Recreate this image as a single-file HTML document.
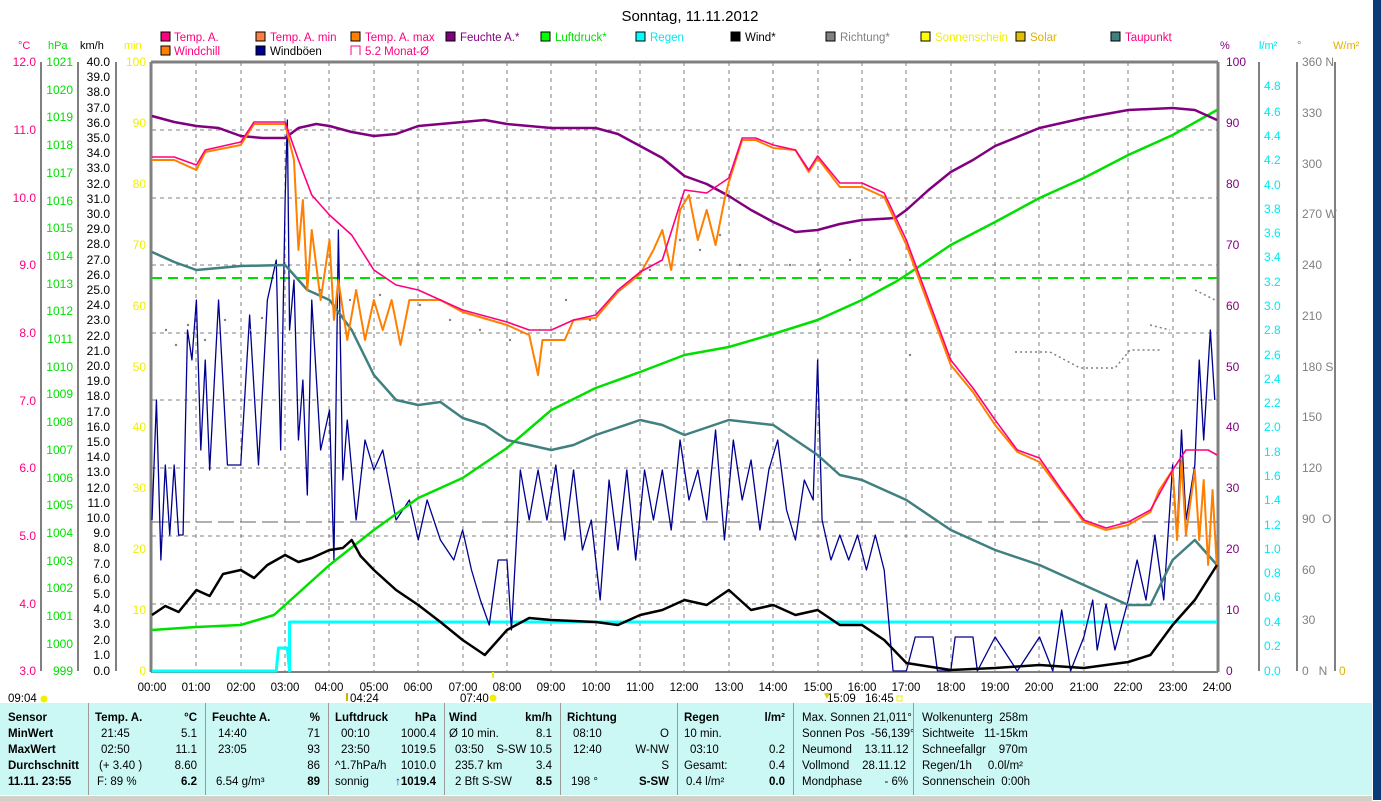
<!DOCTYPE html>
<html><head><meta charset="utf-8"><style>
html,body{margin:0;padding:0;background:#fff;width:1381px;height:800px;overflow:hidden;font-family:"Liberation Sans",sans-serif}
svg text{font-family:"Liberation Sans",sans-serif}
.panel{position:absolute;left:0;top:703px;width:1372px;height:92px;background:#cbf7f5;font-size:11.5px;color:#000}
.col{position:absolute;top:0;height:92px;border-left:1px solid #9a9a9a}
.r{position:absolute;white-space:nowrap}
.b{font-weight:bold}
</style></head><body>
<svg width="1381" height="800" style="position:absolute;left:0;top:0" xmlns="http://www.w3.org/2000/svg">
<rect x="1373" y="0" width="8" height="800" fill="#0b3a78"/>
<text x="690" y="21" font-size="15" text-anchor="middle">Sonntag, 11.11.2012</text>
<g font-size="11.5">
<rect x="161" y="32" width="9" height="9" fill="#ff0080" stroke="#000"/><text x="174" y="41" fill="#ff0080">Temp. A.</text>
<rect x="161" y="46" width="9" height="9" fill="#ff8000" stroke="#000"/><text x="174" y="55" fill="#ff0080">Windchill</text>
<rect x="256" y="32" width="9" height="9" fill="#ff8040" stroke="#000"/><text x="270" y="41" fill="#ff0080">Temp. A. min</text>
<rect x="256" y="46" width="9" height="9" fill="#000090" stroke="#000"/><text x="270" y="55">Windböen</text>
<rect x="351" y="32" width="9" height="9" fill="#ff8000" stroke="#000"/><text x="365" y="41" fill="#ff0080">Temp. A. max</text>
<path d="M351 55V46h9v9" fill="none" stroke="#ff0080"/><text x="365" y="55" fill="#ff0080">5.2 Monat-Ø</text>
<rect x="446" y="32" width="9" height="9" fill="#800080" stroke="#000"/><text x="460" y="41" fill="#800080">Feuchte A.*</text>
<rect x="541" y="32" width="9" height="9" fill="#00ff00" stroke="#000"/><text x="555" y="41" fill="#00e000">Luftdruck*</text>
<rect x="636" y="32" width="9" height="9" fill="#00ffff" stroke="#000"/><text x="650" y="41" fill="#00e8f0">Regen</text>
<rect x="731" y="32" width="9" height="9" fill="#000" stroke="#000"/><text x="745" y="41">Wind*</text>
<rect x="826" y="32" width="9" height="9" fill="#808080" stroke="#000"/><text x="840" y="41" fill="#808080">Richtung*</text>
<rect x="921" y="32" width="9" height="9" fill="#ffff00" stroke="#000"/><text x="935" y="41" fill="#f0f000">Sonnenschein</text>
<rect x="1016" y="32" width="9" height="9" fill="#e0c000" stroke="#000"/><text x="1030" y="41" fill="#e0b000">Solar</text>
<rect x="1111" y="32" width="9" height="9" fill="#408080" stroke="#000"/><text x="1125" y="41" fill="#ff0080">Taupunkt</text>
</g>
<g font-size="11">
<text x="18" y="49" fill="#ff0080">°C</text><text x="48" y="49" fill="#00e000">hPa</text><text x="80" y="49">km/h</text><text x="124" y="49" fill="#f0f000">min</text>
<text x="1220" y="49" fill="#800080">%</text><text x="1259" y="49" fill="#00e8f0">l/m²</text><text x="1297" y="49" fill="#808080">°</text><text x="1333" y="49" fill="#e0b000">W/m²</text>
</g>
<!-- axis lines -->
<g stroke="#808080" stroke-width="2" fill="none">
<path d="M41 62V671M78 62V671M116 62V671M1259 62V671M1297 62V671M1335 62V671"/>
</g>
<path d="M151 62V672M1218 62V672" stroke="#808080" stroke-width="3"/>
<path d="M151 62H1218" stroke="#808080" stroke-width="3"/>
<path d="M151 672H1218" stroke="#808080" stroke-width="2"/>
<!-- grid -->
<g stroke="#808080" stroke-dasharray="4,4" stroke-width="1">
<path d="M196 62V671M241 62V671M285 62V671M329 62V671M374 62V671M418 62V671M463 62V671M507 62V671M551 62V671M596 62V671M640 62V671M684 62V671M729 62V671M773 62V671M818 62V671M862 62V671M906 62V671M951 62V671M995 62V671M1039 62V671M1084 62V671M1128 62V671M1173 62V671"/>
<path d="M152 130H1217M152 198H1217M152 265H1217M152 333H1217M152 400H1217M152 468H1217M152 536H1217M152 604H1217"/>
</g>
<path d="M152 278H1217" stroke="#00e000" stroke-dasharray="10,6" stroke-width="2"/>
<path d="M152 522H1217" stroke="#606060" stroke-dasharray="16,6" stroke-width="1"/>
<!-- left ticks and labels -->
<g font-size="12" text-anchor="end" fill="#ff0080">
<text x="36" y="66">12.0</text><text x="36" y="134">11.0</text><text x="36" y="202">10.0</text><text x="36" y="269">9.0</text><text x="36" y="337">8.0</text><text x="36" y="405">7.0</text><text x="36" y="472">6.0</text><text x="36" y="540">5.0</text><text x="36" y="608">4.0</text><text x="36" y="675">3.0</text>
</g>
<g font-size="12" text-anchor="end" fill="#00e000">
<text x="73" y="66">1021</text><text x="73" y="94">1020</text><text x="73" y="121">1019</text><text x="73" y="149">1018</text><text x="73" y="177">1017</text><text x="73" y="205">1016</text><text x="73" y="232">1015</text><text x="73" y="260">1014</text><text x="73" y="288">1013</text><text x="73" y="315">1012</text><text x="73" y="343">1011</text><text x="73" y="371">1010</text><text x="73" y="398">1009</text><text x="73" y="426">1008</text><text x="73" y="454">1007</text><text x="73" y="482">1006</text><text x="73" y="509">1005</text><text x="73" y="537">1004</text><text x="73" y="565">1003</text><text x="73" y="592">1002</text><text x="73" y="620">1001</text><text x="73" y="648">1000</text><text x="73" y="675">999</text>
</g>
<g font-size="12" text-anchor="end" fill="#000" id="kmh">
<text x="110" y="66">40.0</text><text x="110" y="81">39.0</text><text x="110" y="96">38.0</text><text x="110" y="112">37.0</text><text x="110" y="127">36.0</text><text x="110" y="142">35.0</text><text x="110" y="157">34.0</text><text x="110" y="172">33.0</text><text x="110" y="188">32.0</text><text x="110" y="203">31.0</text><text x="110" y="218">30.0</text><text x="110" y="233">29.0</text><text x="110" y="248">28.0</text><text x="110" y="264">27.0</text><text x="110" y="279">26.0</text><text x="110" y="294">25.0</text><text x="110" y="309">24.0</text><text x="110" y="324">23.0</text><text x="110" y="340">22.0</text><text x="110" y="355">21.0</text><text x="110" y="370">20.0</text><text x="110" y="385">19.0</text><text x="110" y="400">18.0</text><text x="110" y="416">17.0</text><text x="110" y="431">16.0</text><text x="110" y="446">15.0</text><text x="110" y="461">14.0</text><text x="110" y="476">13.0</text><text x="110" y="492">12.0</text><text x="110" y="507">11.0</text><text x="110" y="522">10.0</text><text x="110" y="537">9.0</text><text x="110" y="552">8.0</text><text x="110" y="568">7.0</text><text x="110" y="583">6.0</text><text x="110" y="598">5.0</text><text x="110" y="613">4.0</text><text x="110" y="628">3.0</text><text x="110" y="644">2.0</text><text x="110" y="659">1.0</text><text x="110" y="675">0.0</text>
</g>
<g font-size="12" text-anchor="end" fill="#f0f000">
<text x="146" y="66">100</text><text x="146" y="127">90</text><text x="146" y="188">80</text><text x="146" y="249">70</text><text x="146" y="310">60</text><text x="146" y="371">50</text><text x="146" y="431">40</text><text x="146" y="492">30</text><text x="146" y="553">20</text><text x="146" y="614">10</text><text x="146" y="675">0</text>
</g>
<g font-size="12" fill="#800080">
<text x="1226" y="66">100</text><text x="1226" y="127">90</text><text x="1226" y="188">80</text><text x="1226" y="249">70</text><text x="1226" y="310">60</text><text x="1226" y="371">50</text><text x="1226" y="431">40</text><text x="1226" y="492">30</text><text x="1226" y="553">20</text><text x="1226" y="614">10</text><text x="1226" y="675">0</text>
</g>
<g font-size="12" fill="#00e8f0">
<text x="1264" y="90">4.8</text><text x="1264" y="116">4.6</text><text x="1264" y="140">4.4</text><text x="1264" y="164">4.2</text><text x="1264" y="189">4.0</text><text x="1264" y="213">3.8</text><text x="1264" y="237">3.6</text><text x="1264" y="261">3.4</text><text x="1264" y="286">3.2</text><text x="1264" y="310">3.0</text><text x="1264" y="334">2.8</text><text x="1264" y="359">2.6</text><text x="1264" y="383">2.4</text><text x="1264" y="407">2.2</text><text x="1264" y="431">2.0</text><text x="1264" y="456">1.8</text><text x="1264" y="480">1.6</text><text x="1264" y="504">1.4</text><text x="1264" y="529">1.2</text><text x="1264" y="553">1.0</text><text x="1264" y="577">0.8</text><text x="1264" y="601">0.6</text><text x="1264" y="626">0.4</text><text x="1264" y="650">0.2</text><text x="1264" y="675">0.0</text>
</g>
<g font-size="12" fill="#808080">
<text x="1302" y="66">360 N</text><text x="1302" y="117">330</text><text x="1302" y="168">300</text><text x="1302" y="218">270 W</text><text x="1302" y="269">240</text><text x="1302" y="320">210</text><text x="1302" y="371">180 S</text><text x="1302" y="421">150</text><text x="1302" y="472">120</text><text x="1302" y="523">90 &#160;O</text><text x="1302" y="574">60</text><text x="1302" y="624">30</text><text x="1302" y="675">0 &#160;&#160;N</text>
</g>
<text x="1339" y="675" font-size="12" fill="#e0b000">0</text>
<!-- data -->
<g transform="translate(152,0) scale(44.375,1)" fill="none" stroke-linejoin="round">
<polyline vector-effect="non-scaling-stroke" stroke="#00ffff" stroke-width="3" points="0,671 2.8,671 2.85,648 3.05,648 3.1,671 3.1,622 24,622"/>
<polyline vector-effect="non-scaling-stroke" stroke="#000090" stroke-width="1.3" points="0,520 0.1,400 0.2,560 0.3,465 0.4,535 0.5,465 0.6,535 0.7,535 0.8,330 0.9,360 1.0,300 1.1,450 1.2,360 1.3,470 1.5,300 1.7,465 2.0,465 2.2,315 2.4,465 2.6,300 2.8,260 2.9,450 3.0,200 3.05,120 3.1,330 3.2,280 3.3,440 3.4,380 3.5,495 3.6,300 3.8,450 4.0,410 4.1,560 4.2,230 4.3,480 4.4,420 4.6,520 4.8,440 5.0,470 5.2,450 5.5,520 5.8,500 6.0,540 6.2,500 6.5,540 6.8,560 7.0,530 7.2,570 7.4,600 7.6,625 7.8,560 8.0,560 8.1,630 8.3,470 8.5,520 8.7,470 8.9,520 9.1,465 9.3,540 9.5,470 9.7,550 9.9,520 10.1,600 10.3,480 10.5,550 10.7,470 10.9,560 11.1,470 11.3,520 11.5,470 11.7,530 11.9,440 12.1,500 12.3,470 12.5,520 12.7,430 12.9,540 13.1,440 13.3,500 13.5,460 13.7,530 13.9,470 14.1,440 14.3,510 14.5,540 14.7,480 14.9,500 15.0,360 15.1,520 15.3,560 15.5,535 15.7,560 15.9,535 16.1,570 16.3,535 16.5,570 16.6,620 16.7,671 17.0,671 17.2,637 17.6,637 17.7,671 18.0,671 18.1,637 18.5,637 18.6,671 19.0,637 19.5,671 20.0,637 20.3,671 20.5,610 20.7,671 21.0,637 21.2,600 21.3,650 21.5,604 21.7,650 22.0,600 22.2,560 22.4,600 22.6,535 22.8,600 23.0,465 23.1,535 23.2,430 23.3,520 23.5,465 23.6,360 23.7,440 23.85,330 23.95,400"/>
<polyline vector-effect="non-scaling-stroke" stroke="#00e000" stroke-width="2.5" points="0,630 1,627 2,625 2.75,615 3.5,585 4,565 5,530 6,498 7,478 8,448 9,410 10,388 11,372 12,355 13,347 14,334 15,320 16,300 16.75,282 17,275 18,245 19,222 20,198 21,178 22,155 23,135 24,110"/>
<polyline vector-effect="non-scaling-stroke" stroke="#800080" stroke-width="2.5" points="0,116 0.5,122 1,126 1.5,128 2,136 2.5,138 3,138 3.3,128 3.7,124 4,126 4.5,132 5,136 5.5,134 6,126 7,122 7.5,120 8,124 9,128 10,128 10.5,134 11,146 11.5,158 12,176 12.5,184 13,196 13.5,210 14,222 14.5,232 15,230 15.5,224 16,220 16.75,218 17,210 17.5,190 18,172 18.5,160 19,146 20,128 21,118 22,110 23,108 23.5,110 24,120"/>
<polyline vector-effect="non-scaling-stroke" stroke="#408080" stroke-width="2.5" points="0,252 0.5,262 1,270 2,266 3,265 3.5,290 4,300 4.5,330 5,375 5.5,400 6,405 6.5,402 7,418 7.5,425 8,440 8.5,445 9,450 9.5,445 10,435 11,420 11.5,425 12,435 13,420 14,425 15,455 15.5,475 16,480 16.5,490 17,500 18,530 19,550 20,565 21,585 22,605 22.5,605 23,560 23.5,540 24,565"/>
<polyline vector-effect="non-scaling-stroke" stroke="#ff8000" stroke-width="2" points="0,160 0.5,160 1,170 1.2,152 2,145 2.3,124 3,124 3.2,160 3.3,250 3.4,200 3.5,290 3.6,230 3.8,300 4,240 4.1,320 4.2,280 4.4,340 4.6,290 4.8,340 5,300 5.2,330 5.4,300 5.6,345 5.8,300 6,300 6.5,300 7,312 8,325 8.5,335 8.7,375 8.8,340 9.3,340 9.5,320 10,318 10.5,292 11,274 11.3,250 11.5,230 11.7,270 11.9,210 12.1,195 12.3,240 12.5,210 12.7,245 12.9,200 13,182 13.3,140 13.6,140 14,148 14.5,150 14.8,172 15,158 15.5,187 16,187 16.5,197 17,245 17.5,305 18,365 18.5,392 19,425 19.5,452 20,462 20.5,492 21,522 21.5,530 22,525 22.5,512 22.7,490 23,470 23.1,540 23.2,460 23.3,535 23.5,470 23.6,540 23.7,480 23.8,565 23.9,490 24,570"/>
<polyline vector-effect="non-scaling-stroke" stroke="#ff0080" stroke-width="1.6" points="0,157 0.5,157 1,165 1.2,150 2,142 2.3,122 3,122 3.3,160 3.6,195 4,215 4.5,235 5,270 5.5,285 6,290 6.5,300 7,310 8,322 8.5,330 9,330 9.5,320 10,315 10.5,290 11,272 11.5,260 12,190 12.5,193 13,178 13.3,138 13.6,138 14,145 14.5,150 14.8,170 15,156 15.5,183 16,183 16.5,193 17,240 17.5,300 18,360 18.5,388 19,420 19.5,450 20,458 20.5,490 21,520 21.5,528 22,522 22.5,510 23,470 23.3,450 23.8,450 24,455"/>
<polyline vector-effect="non-scaling-stroke" stroke="#000" stroke-width="2.5" points="0,615 0.3,606 0.6,612 1,590 1.3,596 1.6,574 2,570 2.3,578 2.6,565 3,555 3.3,562 3.6,558 4,550 4.3,548 4.5,540 4.7,556 5,570 5.5,590 6,605 6.5,622 7,640 7.5,655 8,630 8.5,618 9,620 10,622 10.5,625 11,615 11.5,610 12,600 12.5,605 13,590 13.5,610 14,605 14.5,615 15,610 15.5,625 16,625 16.5,640 17,663 18,670 19,668 20,665 21,668 22,662 22.5,655 23,625 23.5,600 24,565"/>
</g>
<g fill="#808080">
<circle cx="166" cy="330" r="1.2"/><circle cx="176" cy="345" r="1.2"/><circle cx="188" cy="325" r="1.2"/><circle cx="205" cy="340" r="1.2"/><circle cx="225" cy="320" r="1.2"/><circle cx="250" cy="330" r="1.2"/><circle cx="262" cy="318" r="1.2"/><circle cx="320" cy="290" r="1.2"/><circle cx="350" cy="300" r="1.2"/><circle cx="380" cy="295" r="1.2"/><circle cx="420" cy="305" r="1.2"/><circle cx="450" cy="320" r="1.2"/><circle cx="480" cy="330" r="1.2"/><circle cx="510" cy="340" r="1.2"/><circle cx="540" cy="330" r="1.2"/><circle cx="566" cy="300" r="1.2"/><circle cx="590" cy="320" r="1.2"/><circle cx="620" cy="290" r="1.2"/><circle cx="650" cy="270" r="1.2"/><circle cx="680" cy="240" r="1.2"/><circle cx="700" cy="250" r="1.2"/><circle cx="720" cy="235" r="1.2"/><circle cx="740" cy="265" r="1.2"/><circle cx="760" cy="270" r="1.2"/><circle cx="790" cy="265" r="1.2"/><circle cx="820" cy="270" r="1.2"/><circle cx="850" cy="260" r="1.2"/><circle cx="880" cy="280" r="1.2"/><circle cx="910" cy="355" r="1.2"/><circle cx="950" cy="355" r="1.2"/>
</g>
<path d="M1015 352H1050L1080 368H1115L1130 350H1160M1150 325L1170 330M1195 290L1215 300" stroke="#808080" stroke-width="1.5" stroke-dasharray="2,3" fill="none"/>
<!-- time labels -->
<g font-size="11.5" text-anchor="middle">
<text x="152" y="691">00:00</text><text x="196" y="691">01:00</text><text x="241" y="691">02:00</text><text x="285" y="691">03:00</text><text x="329" y="691">04:00</text><text x="374" y="691">05:00</text><text x="418" y="691">06:00</text><text x="463" y="691">07:00</text><text x="507" y="691">08:00</text><text x="551" y="691">09:00</text><text x="596" y="691">10:00</text><text x="640" y="691">11:00</text><text x="684" y="691">12:00</text><text x="729" y="691">13:00</text><text x="773" y="691">14:00</text><text x="818" y="691">15:00</text><text x="862" y="691">16:00</text><text x="906" y="691">17:00</text><text x="951" y="691">18:00</text><text x="995" y="691">19:00</text><text x="1039" y="691">20:00</text><text x="1084" y="691">21:00</text><text x="1128" y="691">22:00</text><text x="1173" y="691">23:00</text><text x="1217" y="691">24:00</text>
</g>
<g font-size="11.5">
<text x="8" y="702">09:04</text><circle cx="44" cy="699" r="3.5" fill="#f0f000"/>
<text x="350" y="702">04:24</text><path d="M347 693v8" stroke="#d0b000" stroke-width="2"/>
<text x="460" y="702">07:40</text><circle cx="493" cy="698" r="3.5" fill="#f0f000"/><path d="M493 672v6" stroke="#f0f000" stroke-width="2"/>
<text x="827" y="702">15:09</text><path d="M824 693l3 6 3-6z" fill="#e0d000"/>
<text x="865" y="702">16:45</text><rect x="897" y="696" width="5" height="5" fill="none" stroke="#f0f000"/>
</g>
</svg>
<div class="panel">
<div class="r b" style="left:8px;top:9px">Sensor</div>
<div class="r b" style="left:8px;top:25px">MinWert</div>
<div class="r b" style="left:8px;top:41px">MaxWert</div>
<div class="r b" style="left:8px;top:57px">Durchschnitt</div>
<div class="r b" style="left:8px;top:73px">11.11. 23:55</div>
<div class="col" style="left:88px;width:116px">
<div class="r b" style="left:6px;top:9px">Temp. A.</div><div class="r b" style="right:8px;top:9px">°C</div>
<div class="r" style="left:12px;top:25px">21:45</div><div class="r" style="right:8px;top:25px">5.1</div>
<div class="r" style="left:12px;top:41px">02:50</div><div class="r" style="right:8px;top:41px">11.1</div>
<div class="r" style="left:10px;top:57px">(+ 3.40 )</div><div class="r" style="right:8px;top:57px">8.60</div>
<div class="r" style="left:8px;top:73px">F: 89 %</div><div class="r b" style="right:8px;top:73px">6.2</div></div>
<div class="col" style="left:205px;width:122px">
<div class="r b" style="left:6px;top:9px">Feuchte A.</div><div class="r b" style="right:8px;top:9px">%</div>
<div class="r" style="left:12px;top:25px">14:40</div><div class="r" style="right:8px;top:25px">71</div>
<div class="r" style="left:12px;top:41px">23:05</div><div class="r" style="right:8px;top:41px">93</div>
<div class="r" style="right:8px;top:57px">86</div>
<div class="r" style="left:10px;top:73px">6.54 g/m³</div><div class="r b" style="right:8px;top:73px">89</div></div>
<div class="col" style="left:328px;width:115px">
<div class="r b" style="left:6px;top:9px">Luftdruck</div><div class="r b" style="right:8px;top:9px">hPa</div>
<div class="r" style="left:12px;top:25px">00:10</div><div class="r" style="right:8px;top:25px">1000.4</div>
<div class="r" style="left:12px;top:41px">23:50</div><div class="r" style="right:8px;top:41px">1019.5</div>
<div class="r" style="left:6px;top:57px">^1.7hPa/h</div><div class="r" style="right:8px;top:57px">1010.0</div>
<div class="r" style="left:6px;top:73px">sonnig</div><div class="r b" style="right:8px;top:73px"><span style="color:#1040a0">↑</span>1019.4</div></div>
<div class="col" style="left:444px;width:115px">
<div class="r b" style="left:4px;top:9px">Wind</div><div class="r b" style="right:8px;top:9px">km/h</div>
<div class="r" style="left:4px;top:25px">Ø 10 min.</div><div class="r" style="right:8px;top:25px">8.1</div>
<div class="r" style="left:10px;top:41px">03:50</div><div class="r" style="right:8px;top:41px">S-SW 10.5</div>
<div class="r" style="left:10px;top:57px">235.7 km</div><div class="r" style="right:8px;top:57px">3.4</div>
<div class="r" style="left:10px;top:73px">2 Bft S-SW</div><div class="r b" style="right:8px;top:73px">8.5</div></div>
<div class="col" style="left:560px;width:116px">
<div class="r b" style="left:6px;top:9px">Richtung</div>
<div class="r" style="left:12px;top:25px">08:10</div><div class="r" style="right:8px;top:25px">O</div>
<div class="r" style="left:12px;top:41px">12:40</div><div class="r" style="right:8px;top:41px">W-NW</div>
<div class="r" style="right:8px;top:57px">S</div>
<div class="r" style="left:10px;top:73px">198 °</div><div class="r b" style="right:8px;top:73px">S-SW</div></div>
<div class="col" style="left:677px;width:115px">
<div class="r b" style="left:6px;top:9px">Regen</div><div class="r b" style="right:8px;top:9px">l/m²</div>
<div class="r" style="left:6px;top:25px">10 min.</div>
<div class="r" style="left:12px;top:41px">03:10</div><div class="r" style="right:8px;top:41px">0.2</div>
<div class="r" style="left:6px;top:57px">Gesamt:</div><div class="r" style="right:8px;top:57px">0.4</div>
<div class="r" style="left:8px;top:73px">0.4 l/m²</div><div class="r b" style="right:8px;top:73px">0.0</div></div>
<div class="col" style="left:793px;width:119px">
<div class="r" style="left:8px;top:9px">Max. Sonnen 21,011°</div>
<div class="r" style="left:8px;top:25px">Sonnen Pos &#160;-56,139°</div>
<div class="r" style="left:8px;top:41px">Neumond &#160;&#160;&#160;13.11.12</div>
<div class="r" style="left:8px;top:57px">Vollmond &#160;&#160;&#160;28.11.12</div>
<div class="r" style="left:8px;top:73px">Mondphase &#160;&#160;&#160;&#160;&#160;&#160;- 6%</div></div>
<div class="col" style="left:913px;width:200px">
<div class="r" style="left:8px;top:9px">Wolkenunterg &#160;258m</div>
<div class="r" style="left:8px;top:25px">Sichtweite &#160;&#160;11-15km</div>
<div class="r" style="left:8px;top:41px">Schneefallgr &#160;&#160;&#160;970m</div>
<div class="r" style="left:8px;top:57px">Regen/1h &#160;&#160;&#160;&#160;0.0l/m²</div>
<div class="r" style="left:8px;top:73px">Sonnenschein &#160;0:00h</div></div>
</div>
<div style="position:absolute;left:0;top:795px;width:1372px;height:5px;background:#d4d0c8;border-top:1px solid #fff"></div>
</body></html>
